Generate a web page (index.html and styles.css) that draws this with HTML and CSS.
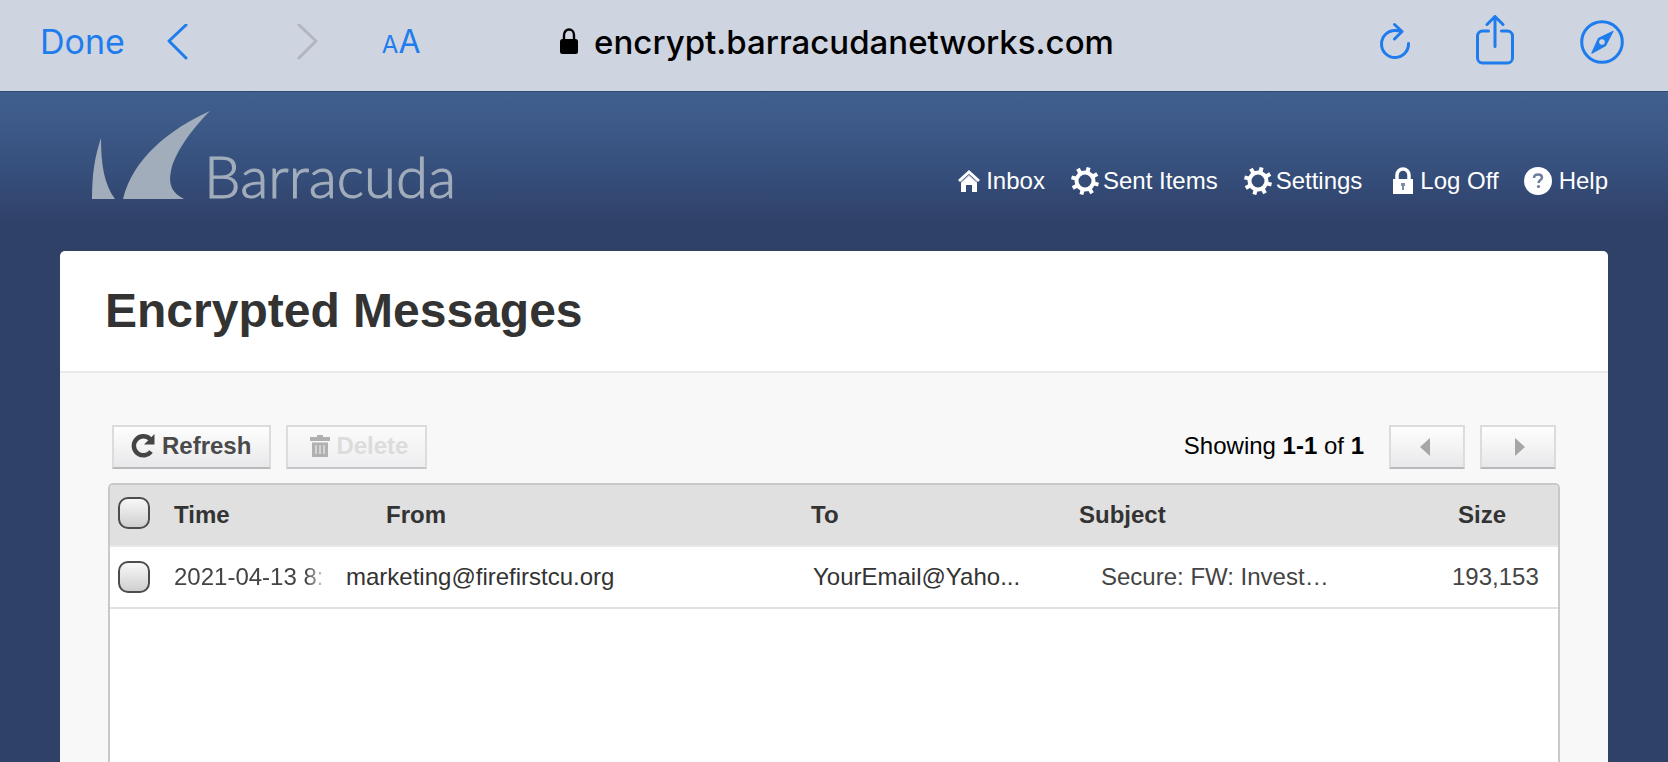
FILE: index.html
```html
<!DOCTYPE html>
<html lang="en">
<head>
    <meta charset="UTF-8">
    <meta name="viewport" content="width=device-width, initial-scale=1.0">
    <title>Encrypted Messages</title>
    <link rel="stylesheet" href="styles.css">
</head>
<body>
    <div class="browser-bar">
        <div class="bar-left">
            <button type="button" class="bar-btn done">Done</button>
            <button type="button" class="bar-btn back" aria-label="Back">
                <svg width="22" height="36" viewBox="0 0 22 36"><path d="M20 1L3 17l17 17"/></svg>
            </button>
            <button type="button" class="bar-btn forward" aria-label="Forward" disabled>
                <svg width="22" height="36" viewBox="0 0 22 36"><path d="M3 1l17 16L3 34"/></svg>
            </button>
            <button type="button" class="bar-btn text-size"><span class="small-a">A</span>A</button>
        </div>
        <div class="address">
            <svg width="18" height="28" viewBox="0 0 18 28"><path d="M4 12V7a5 5.500 0 0 1 10 0v5" fill="none" stroke="#000" stroke-width="2.400"/><rect y="11" width="18" height="15" rx="2.500"/></svg>
            <span>encrypt.barracudanetworks.com</span>
        </div>
        <div class="bar-right">
            <button type="button" class="bar-btn" aria-label="Reload">
                <svg width="30" height="40" viewBox="0 0 30 40"><path d="M28.500 21.500A13.500 13.500 0 1 1 15 8.500q4 0 7 1M14.500 2.500l7.500 7-7.500 7.500"/></svg>
            </button>
            <button type="button" class="bar-btn" aria-label="Share">
                <svg width="38" height="54" viewBox="0 0 38 54"><path d="M12.500 16H6.500a5 5 0 0 0-5 5v22a5 5 0 0 0 5 5h25a5 5 0 0 0 5-5V21a5 5 0 0 0-5-5h-6M19 31.500V2M11 9.500l8-8 8 8"/></svg>
            </button>
            <button type="button" class="bar-btn" aria-label="Open in Safari">
                <svg width="44" height="44" viewBox="0 0 44 44"><circle cx="22" cy="22" r="20.300"/><path class="needle" fill-rule="evenodd" d="M33 10.700q1-.3.500.8L26 26 12.500 33.500q-1.800.5-1-1L18 18zM22 19.200a2.800 2.800 0 1 0 0 5.600 2.800 2.800 0 0 0 0-5.600z"/></svg>
            </button>
        </div>
    </div>

    <div class="page">
        <div class="header">
            <div class="logo">
                <svg width="119" height="88" viewBox="0 0 119 88"><path d="M9 27C3 45 0 62 0 88h23C12 73 9 53 9 27zM118 0C78 18 41 47 31 88h61C80 82 76 73 79 60 82 43 99 19 118 0z"/></svg>
                <span class="logo-text">Barracuda</span>
            </div>
            <div class="nav">
                <a href="#" class="nav-home">
                    <svg width="22" height="24" viewBox="0 0 22 24"><path d="M11 6l8 7v10h-5v-7H8v7H3V13z"/><path d="M1 12L11 3l10 9" fill="none" stroke="#fff" stroke-width="3"/><path d="M3 13.500L11 6.500l8 7" fill="none" stroke="#a9b3c8" stroke-width="1"/></svg>
                    Inbox</a>
                <a href="#" class="nav-sent">
                    <svg width="28" height="28" viewBox="0 0 28 28"><circle cx="14" cy="14" r="8.500" fill="none" stroke="#fff" stroke-width="4"/><g id="teeth" stroke="#fff" stroke-width="4"><path d="M14 5V0M14 23v5M5 14H0M23 14h5M7.600 7.600L4 4M20.400 20.400L24 24M20.400 7.600L24 4M7.600 20.400L4 24" transform="rotate(15 14 14)"/></g></svg>
                    Sent Items</a>
                <a href="#" class="nav-settings">
                    <svg width="28" height="28" viewBox="0 0 28 28"><circle cx="14" cy="14" r="8.500" fill="none" stroke="#fff" stroke-width="4"/><use href="#teeth"/></svg>
                    Settings</a>
                <a href="#" class="nav-logoff">
                    <svg width="22" height="28" viewBox="0 0 22 28"><path d="M5 14V8a6 6 0 0 1 12 0v6" fill="none" stroke="#fff" stroke-width="3.500"/><path d="M1 12h20v15H1z"/><path d="M9 16h4v3h-1v4h-2v-4H9z" fill="#7d8aa9"/></svg>
                    Log Off</a>
                <a href="#" class="nav-help">
                    <svg width="30" height="30" viewBox="0 0 30 30"><circle cx="15" cy="15" r="14"/><path d="M11 12q0-3.500 4-3.500t4 3c0 2.500-3.500 2.500-3.500 5.500" fill="none" stroke="#6f7d9f" stroke-width="2.500"/><circle cx="15.500" cy="20.500" r="1.600" fill="#6f7d9f"/></svg>
                    Help</a>
            </div>
        </div>

        <div class="content">
            <h1>Encrypted Messages</h1>
            <div class="panel">
                <div class="toolbar">
                    <button type="button" class="btn refresh">
                        <svg width="26" height="26" viewBox="0 0 26 26"><path d="M21 18.500A9.500 9.500 0 1 1 20 6" fill="none" stroke="#444" stroke-width="4.500"/><path d="M24.500 1v10.500H14z" fill="#444"/></svg>
                        Refresh
                    </button>
                    <button type="button" class="btn delete" disabled>
                        <svg width="20" height="24" viewBox="0 0 20 24"><path fill-rule="evenodd" d="M7 1h6v2h7v4H0V3h7zM2 8.500h16V23H2z"/><path d="M6 11v9M10 11v9M14 11v9" stroke="#d4d4d4" stroke-width="2"/></svg>
                        Delete
                    </button>
                    <span class="showing">Showing <b>1-1</b> of <b>1</b></span>
                    <button type="button" class="btn page-btn prev" aria-label="Previous page" disabled>
                        <svg width="10" height="18" viewBox="0 0 10 18"><path d="M10 0v18L0 9z"/></svg>
                    </button>
                    <button type="button" class="btn page-btn next" aria-label="Next page" disabled>
                        <svg width="10" height="18" viewBox="0 0 10 18"><path d="M0 0v18l10-9z"/></svg>
                    </button>
                </div>

                <div class="message-list">
                    <table>
                        <thead>
                            <tr>
                                <th class="col-check"><input type="checkbox" aria-label="Select all messages"></th>
                                <th class="col-time">Time</th>
                                <th class="col-from">From</th>
                                <th class="col-to">To</th>
                                <th class="col-subject">Subject</th>
                                <th class="col-size">Size</th>
                            </tr>
                        </thead>
                        <tbody>
                            <tr>
                                <td class="col-check"><input type="checkbox" aria-label="Select message"></td>
                                <td class="col-time"><span class="fade">2021-04-13 8:</span></td>
                                <td class="col-from">marketing@firefirstcu.org</td>
                                <td class="col-to">YourEmail@Yaho...</td>
                                <td class="col-subject">Secure: FW: Invest…</td>
                                <td class="col-size">193,153</td>
                            </tr>
                        </tbody>
                    </table>
                </div>
            </div>
        </div>
    </div>
</body>
</html>
```

FILE: styles.css
```css
* {
    box-sizing: border-box;
}
body {
    margin: 0;
    min-height: 100vh;
    display: flex;
    flex-direction: column;
    font-family: "Liberation Sans", Arial, sans-serif;
    font-size: 24px;
    line-height: 28px;
    background-color: #304168;
}
svg {
    display: block;
    flex-shrink: 0;
}
button {
    font: inherit;
    margin: 0;
}

/* browser bar */
.browser-bar {
    display: flex;
    align-items: center;
    justify-content: space-between;
    height: 91px;
    padding: 0 44px 8px 40px;
    background-color: #ced4e0;
    font-family: Inter, "Liberation Sans", sans-serif;
    font-size: 34px;
    line-height: 40px;
}
.bar-left,
.bar-right {
    display: flex;
    align-items: center;
    flex: 1;
}
.bar-right {
    justify-content: flex-end;
    gap: 66px;
}
.bar-btn {
    padding: 0;
    border: none;
    background: none;
    color: #1f7cec;
}
.bar-btn svg {
    fill: none;
    stroke: currentColor;
    stroke-width: 3;
    stroke-linecap: round;
    stroke-linejoin: round;
}
.bar-btn .needle {
    fill: currentColor;
    stroke: none;
}
.back {
    margin-left: 41px;
}
.forward {
    margin-left: 108px;
    color: #b1b6c1;
}
.text-size {
    margin-left: 64px;
    padding-top: 4px;
    font-size: 32px;
}
.small-a {
    font-size: 24px;
}
.address {
    display: flex;
    align-items: center;
    gap: 16px;
    margin-left: 10px;
    font-size: 33px;
    font-weight: 500;
}

/* page header */
.page {
    flex: 1;
    display: flex;
    flex-direction: column;
    padding: 0 60px;
    border-top: 1px solid #2f4a70;
    background: linear-gradient(#405f8f, #3c5886 40px, #344c78 90px, #304168 130px) no-repeat;
}
.header {
    display: flex;
    justify-content: space-between;
    height: 159px;
    padding-left: 32px;
}
.logo {
    display: flex;
    align-items: flex-start;
    padding-top: 19px;
    fill: #a2adbb;
    color: #a2adbb;
}
.logo-text {
    margin-top: 29px;
    margin-left: -7px;
    font-family: Lato, sans-serif;
    font-size: 58px;
    font-weight: 300;
    line-height: 72px;
    -webkit-text-stroke: 1px #a2adbb;
}
.nav {
    display: flex;
    align-items: center;
    height: 30px;
    margin-top: 74px;
    gap: 26px;
}
.nav a {
    display: flex;
    align-items: center;
    gap: 4px;
    color: #fff;
    fill: #fff;
    text-decoration: none;
    white-space: nowrap;
}
.nav .nav-home,
.nav .nav-logoff,
.nav .nav-help {
    gap: 6px;
}
.nav .nav-logoff {
    margin-left: 4px;
}
.nav .nav-help {
    margin-left: -2px;
}

/* content */
.content {
    flex: 1;
    display: flex;
    flex-direction: column;
    border-radius: 5px 5px 0 0;
    background-color: #fff;
}
h1 {
    margin: 0;
    padding: 32px 45px;
    border-bottom: 2px solid #e9e9e9;
    font-size: 48px;
    line-height: 56px;
    color: #333;
}
.panel {
    flex: 1;
    display: flex;
    flex-direction: column;
    padding: 52px 48px 0;
    background-color: #f8f8f8;
}
.toolbar {
    display: flex;
    align-items: center;
    gap: 15px;
    padding: 0 4px;
    margin-bottom: 14px;
}
.btn {
    display: flex;
    align-items: center;
    justify-content: center;
    height: 44px;
    padding: 0 18px 2px 16px;
    border: 2px solid #dcdcdc;
    border-bottom-color: #b9b9bb;
    background: linear-gradient(#fefefe, #e8e8ea);
    font-weight: bold;
    color: #4a4a4a;
    gap: 6px;
}
.delete {
    padding: 0 17px 2px 22px;
    border-bottom-color: #c6c6c8;
    background: linear-gradient(#fbfbfb, #eeeef0);
    color: #dcdcdc;
    fill: #b0b0b0;
}
.page-btn {
    width: 76px;
    fill: #a6a6a6;
}
.prev {
    padding: 0 4px 0 0;
}
.next {
    padding: 0 0 0 4px;
}
.showing {
    margin-left: auto;
    margin-right: 10px;
    padding-bottom: 3px;
    color: #000;
}

/* message table */
.message-list {
    flex: 1;
    border: 2px solid #c9c9c9;
    border-bottom: none;
    border-radius: 5px 5px 0 0;
    background-color: #fff;
    overflow: hidden;
}
table {
    width: 100%;
    table-layout: fixed;
    border-collapse: separate;
    border-spacing: 0;
}
th,
td {
    height: 62px;
    padding: 0;
    border-bottom: 2px solid #e0e0e0;
    text-align: left;
    white-space: nowrap;
    color: #444;
}
th {
    background-color: #e0e0e0;
    border-bottom-color: #e8e8e8;
    color: #333;
}
.col-check {
    width: 64px;
    padding-left: 8px;
}
th.col-check {
    padding-bottom: 4px;
}
.col-time {
    width: 172px;
}
.col-from {
    width: 465px;
}
.col-to {
    width: 268px;
}
.col-size {
    width: 106px;
}
th.col-from {
    padding-left: 40px;
}
td.col-from,
td.col-to {
    color: #333;
}
td.col-to {
    padding-left: 2px;
}
td.col-subject {
    padding-left: 22px;
}
th.col-size {
    padding-left: 6px;
}
.fade {
    -webkit-mask-image: linear-gradient(to right, #000 132px, transparent 154px);
    mask-image: linear-gradient(to right, #000 132px, transparent 154px);
}
input[type="checkbox"] {
    appearance: none;
    display: block;
    width: 32px;
    height: 32px;
    margin: 0;
    border: 2px solid #4c4c4c;
    border-radius: 10px;
    background: linear-gradient(#f8f8f8, #cfcfcf);
}
```
